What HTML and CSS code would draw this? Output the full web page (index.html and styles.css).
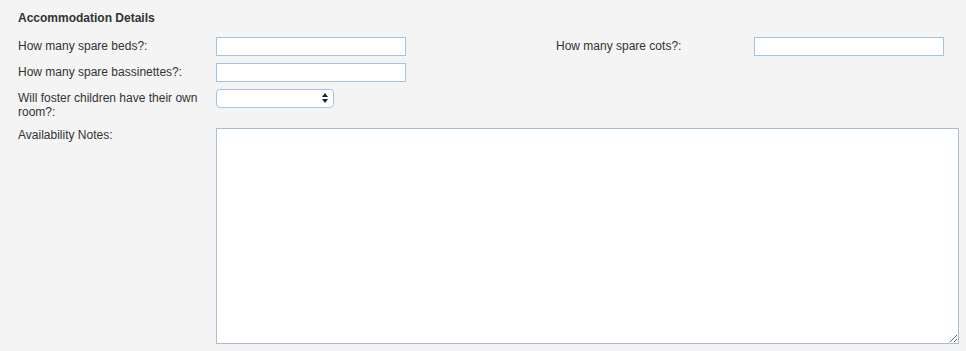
FILE: index.html
```html
<!DOCTYPE html>
<html lang="en">
<head>
    <meta charset="UTF-8">
    <title>Accommodation Details</title>
    <link rel="stylesheet" href="styles.css">
</head>
<body>
    <div class="section">
        <h3 class="section-title">Accommodation Details</h3>

        <div class="form-grid">
            <label class="field-label">How many spare beds?:</label>
            <input class="text-input" type="text">
            <span class="spacer"></span>
            <label class="field-label">How many spare cots?:</label>
            <input class="text-input" type="text">

            <label class="field-label">How many spare bassinettes?:</label>
            <input class="text-input" type="text">
            <span class="spacer wide"></span>

            <label class="field-label">Will foster children have their own room?:</label>
            <div class="select-wrap">
                <select class="select-input">
                    <option></option>
                    <option>Yes</option>
                    <option>No</option>
                </select>
            </div>
            <span class="spacer wide"></span>

            <label class="field-label">Availability Notes:</label>
            <textarea class="notes"></textarea>
        </div>
    </div>
</body>
</html>
```

FILE: styles.css
```css
body {
    margin: 0;
    font-family: 'Liberation Sans', Arial, sans-serif;
    font-size: 12px;
    color: #333;
    background: #f4f4f4;
}

.section {
    padding: 11px 18px 0 18px;
}

.section-title {
    margin: 0 0 12px 0;
    font-size: 12px;
    font-weight: bold;
    line-height: 14px;
}

.form-grid {
    display: grid;
    grid-template-columns: 198px 190px 150px 198px 190px;
    row-gap: 7px;
    align-items: start;
}

.field-label {
    padding-top: 2px;
    padding-right: 12px;
    line-height: 14px;
}

.spacer {
    display: block;
}

.spacer.wide {
    grid-column: span 3;
}

.text-input {
    box-sizing: border-box;
    width: 190px;
    height: 19px;
    margin: 0;
    padding: 1px 4px;
    border: 1px solid #a3c3e6;
    background: #fff;
    font: inherit;
    outline: none;
}

.select-wrap {
    position: relative;
    width: 118px;
    height: 19px;
}

.select-input {
    box-sizing: border-box;
    width: 118px;
    height: 19px;
    margin: 0;
    padding: 0 4px;
    border: 1px solid #a3c3e6;
    border-radius: 4px;
    background: #fff;
    font: inherit;
    appearance: none;
    -webkit-appearance: none;
    outline: none;
}

.select-wrap::after {
    content: "";
    position: absolute;
    right: 6px;
    top: 4px;
    width: 0;
    height: 0;
    border-left: 3px solid transparent;
    border-right: 3px solid transparent;
    border-bottom: 4px solid #222;
    pointer-events: none;
}

.select-wrap::before {
    content: "";
    position: absolute;
    right: 6px;
    top: 10px;
    width: 0;
    height: 0;
    border-left: 3px solid transparent;
    border-right: 3px solid transparent;
    border-top: 4px solid #222;
    pointer-events: none;
}

.notes {
    grid-column: 2 / span 4;
    box-sizing: border-box;
    width: 743px;
    height: 216px;
    margin: 2px 0 0 0;
    border: 1px solid #a9bed3;
    background: #fff;
    font: inherit;
    outline: none;
}
```
